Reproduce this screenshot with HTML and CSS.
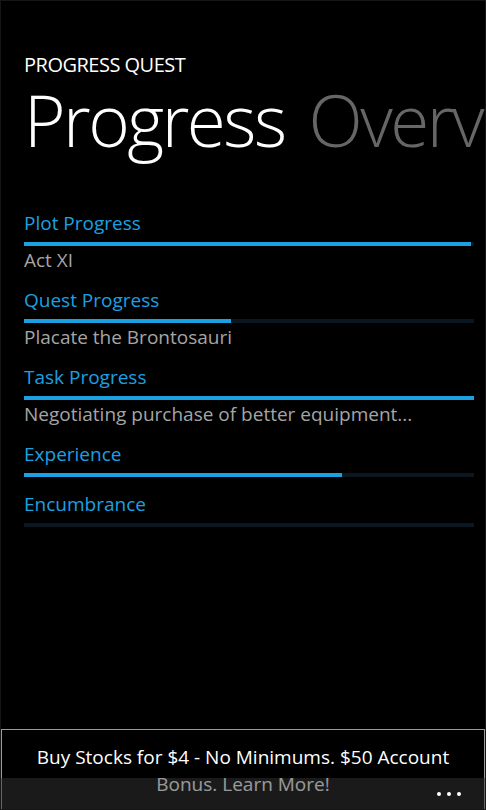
FILE: index.html
```html
<!DOCTYPE html>
<html lang="en">
<head>
    <meta charset="UTF-8">
    <meta name="viewport" content="width=device-width, initial-scale=1.0">
    <title>Progress Quest</title>
    <link rel="stylesheet" href="styles.css">
</head>
<body>

<div class="phone">
    <div class="header">
        <div class="app-title">PROGRESS QUEST</div>
        <div class="pivot">
            <span class="pivot-item active">Progress</span>
            <span class="pivot-item">Overview</span>
        </div>
    </div>

    <div class="stats">
        <div class="stat">
            <div class="stat-label">Plot Progress</div>
            <div class="bar"><div class="fill" style="width: 99.3%"></div></div>
            <div class="stat-value">Act XI</div>
        </div>
        <div class="stat">
            <div class="stat-label">Quest Progress</div>
            <div class="bar"><div class="fill" style="width: 46%"></div></div>
            <div class="stat-value">Placate the Brontosauri</div>
        </div>
        <div class="stat">
            <div class="stat-label">Task Progress</div>
            <div class="bar"><div class="fill" style="width: 100%"></div></div>
            <div class="stat-value">Negotiating purchase of better equipment...</div>
        </div>
        <div class="stat">
            <div class="stat-label">Experience</div>
            <div class="bar"><div class="fill" style="width: 70.7%"></div></div>
        </div>
        <div class="stat">
            <div class="stat-label">Encumbrance</div>
            <div class="bar"><div class="fill" style="width: 0%"></div></div>
        </div>
    </div>

    <div class="ad">
        Buy Stocks for $4 - No Minimums. $50 Account<br>Bonus. Learn More!
    </div>

    <div class="app-bar">
        <span class="dot"></span><span class="dot"></span><span class="dot"></span>
    </div>
</div>

</body>
</html>
```

FILE: styles.css
```css
html, body {
    margin: 0;
    padding: 0;
    background: #000;
}
body {
    font-family: "Open Sans", "Noto Sans", sans-serif;
    color: #fff;
}
.phone {
    position: relative;
    width: 486px;
    height: 810px;
    overflow: hidden;
    display: flex;
    flex-direction: column;
    box-sizing: border-box;
    border: 1px solid #161616;
}
.header {
    padding: 0 0 0 23px;
}
.app-title {
    font-size: 20px;
    line-height: 26px;
    letter-spacing: -0.5px;
    margin-top: 51px;
}
.pivot {
    white-space: nowrap;
    font-size: 71px;
    line-height: 72px;
    margin-top: 6px;
    letter-spacing: -2.5px;
}
.pivot-item {
    font-weight: 300;
    color: #666;
}
.pivot-item.active {
    color: #fff;
    margin-right: 8px;
}
.stats {
    padding: 0 11px 0 23px;
    margin-top: 54px;
}
.stat {
    margin-bottom: 14px;
}
.stat-label {
    color: #1ba1e2;
    font-size: 19px;
    line-height: 26px;
}
.stat-value {
    color: #a5a5a5;
    font-size: 19px;
    line-height: 26px;
    margin-top: 1px;
}
.bar {
    height: 4px;
    margin-top: 6px;
    background: #0a1620;
}
.fill {
    height: 100%;
    background: #1ba1e2;
}
.ad {
    margin-top: auto;
    height: 80px;
    box-sizing: border-box;
    border: 1px solid #9a9a9a;
    border-bottom: none;
    text-align: center;
    font-size: 19px;
    line-height: 27px;
    padding-top: 14px;
}
.app-bar {
    position: absolute;
    left: 0;
    right: 0;
    bottom: 0;
    height: 31px;
    background: rgba(52, 52, 52, 0.5);
    display: flex;
    justify-content: flex-end;
    align-items: center;
    gap: 6px;
    padding-right: 24px;
    box-sizing: border-box;
}
.dot {
    width: 4px;
    height: 4px;
    border-radius: 50%;
    background: #fff;
}
```
